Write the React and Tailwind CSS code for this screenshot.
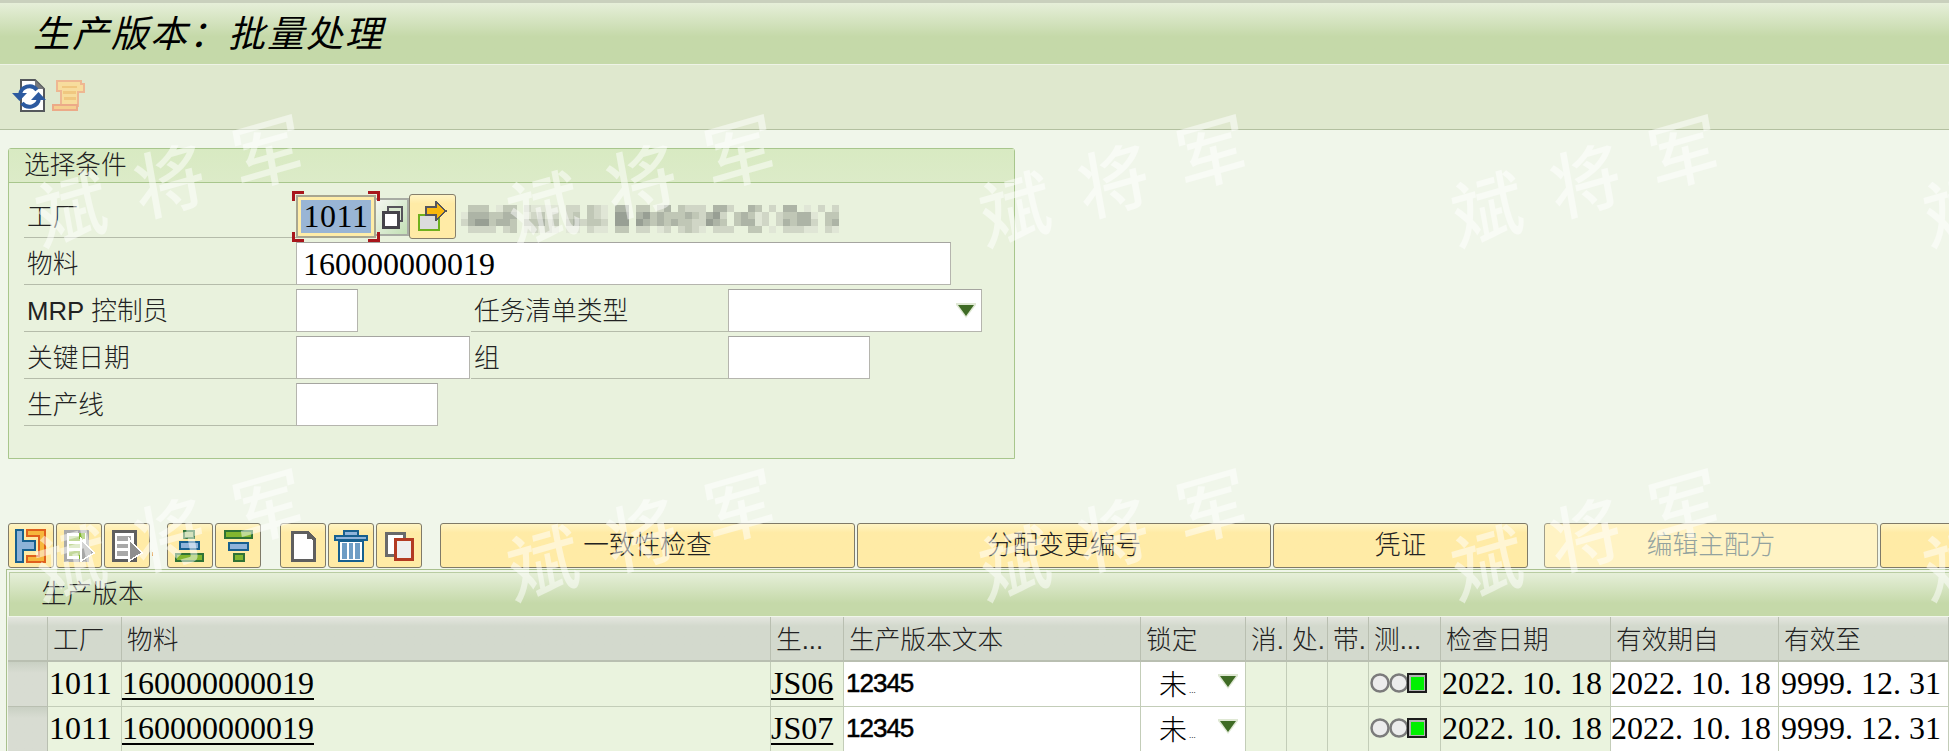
import React from 'react';

// shared column template for the production version table
const tableCols = 'grid grid-cols-[40px_74px_649px_73px_297px_105px_41px_41px_41px_72px_170px_168px_1fr]';
const serif = "font-['Liberation_Serif','Noto_Sans_CJK_SC',serif]";

const mosaicRows = [
  '.333.133.21111.22.321.44.33.24.3222.442..43.2.44.1.2.2.',
  '14443344.12312.23.321.55.4534333432452.34312.233441.33.',
  '24553443.33423.342332.55.5434343322543.34412.243442.34.',
  '.2222.23.12121.11.211.33.22.12.2321.222..33.1.22211.21.',
];
const mosaicColors = { 1: '#e0e6d6', 2: '#d0d6c6', 3: '#c0c7b6', 4: '#adb4a6', 5: '#989f94' };

function Mosaic() {
  return (
    <svg width="385" height="28" viewBox="0 0 385 28" shapeRendering="crispEdges" className="ml-[5px] mt-[14px] shrink-0">
      {mosaicRows.map((row, y) =>
        row.split('').map((c, x) =>
          c === '.' ? null : <rect key={`${x}-${y}`} x={x * 7} y={y * 7} width="7" height="7" fill={mosaicColors[c]} />
        )
      )}
    </svg>
  );
}

function RefreshIcon() {
  return (
    <svg width="34" height="34" viewBox="0 0 34 34">
      <path d="M9 1h14l9 9v22H9z" fill="#fff" stroke="#55585c" strokeWidth="2" />
      <path d="M23 1v9h9z" fill="#77797c" />
      <path d="M8 16A9.5 9.5 0 0 1 25 11" fill="none" stroke="#2c5aa0" strokeWidth="4" />
      <path d="M0 14h15l-7.5 8z" fill="#2c5aa0" />
      <path d="M27 19A9.5 9.5 0 0 1 10 24" fill="none" stroke="#2c5aa0" strokeWidth="4" />
      <path d="M19 21h15l-7.5-8z" fill="#2c5aa0" />
    </svg>
  );
}

function ScrollIcon() {
  return (
    <svg width="34" height="34" viewBox="0 0 34 34" shapeRendering="crispEdges">
      <path d="M5 2h24v3h3v8h-6v14h-1v3H3v-4h6V12H5z" fill="#f7dd9d" stroke="#eeb792" strokeWidth="2" />
      <path d="M10 7h15v2H10zM11 12h13v3H11zM12 18h12v3H12z" fill="#f0c880" />
      <path d="M1 26h24v5H1z" fill="#f5cf8f" stroke="#ecaa88" strokeWidth="2" />
    </svg>
  );
}

function CopyIcon() {
  return (
    <svg width="22" height="24" viewBox="0 0 22 24" shapeRendering="crispEdges">
      <path d="M7 2h14v14H7z" fill="#d8e8cf" stroke="#55535a" strokeWidth="2" />
      <path d="M2 7h15v15H2z" fill="#fff" stroke="#45434a" strokeWidth="3" />
    </svg>
  );
}

function OpenIcon() {
  return (
    <svg width="32" height="32" viewBox="0 0 32 32" shapeRendering="crispEdges">
      <path d="M2 14h20v15H2z" fill="#dcdcdc" stroke="#6fb01d" strokeWidth="2.5" />
      <path d="M9 6h10V1l10 9-10 9v-5H9z" fill="#f9b80f" stroke="#55555c" strokeWidth="1.5" />
    </svg>
  );
}

function IconHistory() {
  return (
    <svg width="32" height="34" viewBox="0 0 32 34" shapeRendering="crispEdges">
      <path d="M12 1h18v32H12v-6h12V7H12z" fill="#f6b73c" stroke="#e0601c" strokeWidth="2" />
      <path d="M1 1h7v11h12v9H8v12H1z" fill="#8eb3d8" stroke="#17608f" strokeWidth="2" />
    </svg>
  );
}

function IconSelect({ dark }) {
  const stroke = dark ? '#5f5f5f' : '#a9a9a9';
  const line = dark ? '#a8a8a8' : '#c3d89a';
  return (
    <svg width="32" height="34" viewBox="0 0 32 34" shapeRendering="crispEdges">
      <path d="M2 2h22v29H2z" fill="#fff" stroke={stroke} strokeWidth="3" />
      <path d="M6 7h14v5H6zM6 15h14v4H6zM6 22h14v5H6z" fill={line} />
      {!dark && <path d="M16 4h6v6h-6zM16 26h6v4h-6z" fill="#7fb52d" />}
      <path d="M18 10l13 14-13 8z" fill={dark ? '#8e8e8e' : '#a7a7a7'} stroke="#fff" strokeWidth="1.5" />
    </svg>
  );
}

function IconPyramid({ flip }) {
  return (
    <svg width="30" height="32" viewBox="0 0 30 32" shapeRendering="crispEdges" className={flip ? 'rotate-180' : ''}>
      <path d="M9 1h10v7H9z" fill={flip ? '#82b62f' : '#aac67c'} stroke="#2f7235" strokeWidth="2" />
      <path d="M5 12h19v7H5z" fill="#8fb4da" stroke="#17608f" strokeWidth="2" />
      <path d="M1 24h27v7H1z" fill="#82b62f" stroke="#2f7235" strokeWidth="2" />
    </svg>
  );
}

function IconDoc() {
  return (
    <svg width="26" height="32" viewBox="0 0 26 32" shapeRendering="crispEdges">
      <path d="M2 2h15l7 7v21H2z" fill="#fff" stroke="#5f5f5f" strokeWidth="3" />
      <path d="M17 1v8h8z" fill="#5f5f5f" />
    </svg>
  );
}

function IconTrash() {
  return (
    <svg width="34" height="34" viewBox="0 0 34 34" shapeRendering="crispEdges">
      <path d="M1 7h32v4H1zM10 2h14v5H10z" fill="#8fb4da" stroke="#17608f" strokeWidth="2" />
      <path d="M5 12h24v20H5z" fill="#fff" stroke="#17608f" strokeWidth="2.5" />
      <path d="M8 14h5v16H8zM15 14h4v16h-4zM21 14h5v16h-5z" fill="#6e9dc5" />
    </svg>
  );
}

function IconCopyDoc() {
  return (
    <svg width="30" height="30" viewBox="0 0 30 30" shapeRendering="crispEdges">
      <path d="M2 2h18v22H2z" fill="#fff" stroke="#6a6a6a" strokeWidth="3" />
      <path d="M11 8h17v20H11z" fill="#eeeeee" stroke="#b33a22" strokeWidth="3" />
    </svg>
  );
}

function Triangle() {
  return (
    <svg width="20" height="15" viewBox="0 0 20 15">
      <path d="M0 0h20v2l-10 13L0 2z" fill="#dfe8d4" />
      <path d="M2 2h16l-8 11z" fill="#3f6b25" />
    </svg>
  );
}

function Lights() {
  return (
    <svg width="57" height="22" viewBox="0 0 57 22" className="shrink-0">
      <circle cx="10" cy="11" r="8.5" fill="#ececec" stroke="#7b7b7b" strokeWidth="2.5" />
      <circle cx="29" cy="11" r="8.5" fill="#ececec" stroke="#7b7b7b" strokeWidth="2.5" />
      <rect x="38" y="2" width="18" height="18" fill="#b4b4b4" stroke="#1c1c1c" strokeWidth="2" />
      <rect x="41" y="5" width="13" height="13" fill="#00f000" />
    </svg>
  );
}

function ToolBtn({ children, className = '' }) {
  return (
    <button className={`w-[46px] h-[45px] flex items-center justify-center rounded-[3px] border border-[#7f7a68] bg-gradient-to-b from-[#fff4c4] to-[#ffeba6] to-[20%] shrink-0 ${className}`}>
      {children}
    </button>
  );
}

function TextBtn({ label, width, disabled }) {
  return (
    <button
      className={`${width} h-[45px] shrink-0 rounded-[3px] border text-[25.7px] font-light flex items-center justify-center ${
        disabled
          ? 'border-[#a09d8a] bg-[#fff3c4] text-[#93a29e]'
          : 'border-[#7f7a68] bg-gradient-to-b from-[#fff4c4] to-[#ffeba6] to-[20%] text-[#222]'
      }`}
    >
      {label}
    </button>
  );
}

function Label({ children, width = 'w-[272px]' }) {
  return (
    <div className={`${width} h-full border-b border-[#b5bcaa] flex items-center pl-[3px] pt-[6px] text-[25.7px] font-light text-[#222] shrink-0`}>
      {children}
    </div>
  );
}

function Field({ width, children }) {
  return (
    <div className={`${width} h-[43px] self-end bg-white border border-[#b5b5ae] border-t-[#a5a5a0] flex items-center shrink-0 ${serif} text-[32px] text-black pl-[6px]`}>
      {children}
    </div>
  );
}

function HeaderCell({ children }) {
  return (
    <div className="h-full border-r border-b-2 border-[#b9bfb1] flex items-center pl-[5px] pt-[3px] text-[25.7px] font-light text-[#222] whitespace-nowrap overflow-hidden">
      {children}
    </div>
  );
}

function Cell({ white, children, className = '' }) {
  return (
    <div className={`h-full border-r border-b border-[#c3cdb8] flex items-center pb-[2px] overflow-hidden whitespace-nowrap ${white ? 'bg-white' : 'bg-[#eaf3de]'} ${className}`}>
      {children}
    </div>
  );
}

function TableRow({ plant, material, version, text, check, from, to }) {
  return (
    <div className={`${tableCols} h-[45px] ${serif} text-[32px] text-black`}>
      <div className="h-full border-r border-b border-[#b9bfb1] bg-gradient-to-b from-[#c9d0c3] to-[#d8dcd2] to-[25%]" />
      <Cell className="pl-[1px]">{plant}</Cell>
      <Cell><span className="underline decoration-2 underline-offset-[4px]">{material}</span></Cell>
      <Cell><span className="underline decoration-2 underline-offset-[4px]">{version}</span></Cell>
      <Cell white className="pl-[2px] font-['Liberation_Sans',sans-serif] text-[26px] tracking-[-1px] [-webkit-text-stroke:0.5px_black]">{text}</Cell>
      <Cell white className="pl-[18px] text-[28px] font-light font-['Noto_Sans_CJK_SC',sans-serif]">
        <span>未</span>
        <span className="text-[9px] mt-[14px] ml-[2px]">...</span>
        <span className="ml-[22px] -mt-[4px]"><Triangle /></span>
      </Cell>
      <Cell />
      <Cell />
      <Cell />
      <Cell className="pl-[1px]"><Lights /></Cell>
      <Cell className="pl-[1px]">{check}</Cell>
      <Cell white>{from}</Cell>
      <Cell white className="pl-[2px]">{to}</Cell>
    </div>
  );
}

const watermarkTiles = [];
[173, 527].forEach((y) => {
  [168, 640, 1112, 1584, 2056].forEach((x) => watermarkTiles.push({ x, y }));
});

function Watermark() {
  return (
    <div className="absolute inset-0 overflow-hidden pointer-events-none">
      {watermarkTiles.map((t) => (
        <span
          key={`${t.x}-${t.y}`}
          className="absolute -translate-x-1/2 -translate-y-1/2 -rotate-[16deg] -skew-x-6 text-[72px] tracking-[30px] font-medium text-white/50 whitespace-nowrap font-['Noto_Sans_CJK_SC',sans-serif]"
          style={{ left: t.x + 15, top: t.y }}
        >
          斌将军
        </span>
      ))}
    </div>
  );
}

export default function App() {
  return (
    <div className="relative w-[1949px] h-[751px] overflow-hidden bg-[#f0f6ea] font-['Liberation_Sans','Noto_Sans_CJK_SC',sans-serif]">
      {/* title */}
      <div className="h-[65px] border-t-[3px] border-[#c9d0bd] border-b border-b-[#eef3e6] bg-gradient-to-b from-[#e6efd9] to-[#c5d9a9] to-[55%] flex items-center pl-[33px] pb-[3px]">
        <h1 className="text-[37px] tracking-[2px] italic font-normal text-black font-['Noto_Sans_CJK_SC',sans-serif]">生产版本：批量处理</h1>
      </div>
      {/* toolbar */}
      <div className="h-[65px] bg-[#dfe8ce] border-b border-[#b3c0a0] flex items-center pl-[12px] gap-[6px] pb-[3px]">
        <RefreshIcon />
        <ScrollIcon />
      </div>

      {/* selection */}
      <div className="ml-[8px] mt-[18px] w-[1007px] h-[311px] border border-[#a8c68c] rounded-t-[3px] bg-[#e9f2dd]">
        <div className="h-[34px] border-b border-[#a8c68c] bg-gradient-to-b from-[#d8eac2] to-[#dcebc8] flex items-center pl-[15px] text-[25.7px] font-light text-[#222]">
          选择条件
        </div>
        <div className="pt-[8px] pl-[15px]">
          <div className="flex h-[47px]">
            <Label>工厂</Label>
            <div className="relative w-[80px] h-[43px] self-start mt-[4px] shrink-0 bg-[#ffeda8] border-2 border-[#a8a690] flex items-center justify-center">
              <span className={`${serif} text-[32px] leading-[33px] bg-[#99b5d5] text-black px-[3px] tracking-[0.5px]`}>1011</span>
              <span className="absolute -left-[6px] -top-[6px] w-[12px] h-[10px] border-l-[3px] border-t-[3px] border-[#a8161c]" />
              <span className="absolute -right-[6px] -top-[6px] w-[12px] h-[10px] border-r-[3px] border-t-[3px] border-[#a8161c]" />
              <span className="absolute -left-[6px] -bottom-[6px] w-[12px] h-[10px] border-l-[3px] border-b-[3px] border-[#a8161c]" />
              <span className="absolute -right-[6px] -bottom-[6px] w-[12px] h-[10px] border-r-[3px] border-b-[3px] border-[#a8161c]" />
            </div>
            <div className="w-[33px] h-[38px] mt-[7px] shrink-0 border-2 border-l-0 border-[#a8aca4] bg-gradient-to-br from-[#f4f7f1] to-[#c3e0b5] flex items-center justify-center">
              <CopyIcon />
            </div>
            <div className="w-[47px] h-[45px] mt-[3px] shrink-0 rounded-[3px] border border-[#857f6c] bg-gradient-to-b from-[#fff4c4] to-[#ffeba6] to-[20%] flex items-center justify-center">
              <OpenIcon />
            </div>
            <Mosaic />
          </div>
          <div className="flex h-[47px]">
            <Label>物料</Label>
            <Field width="w-[655px]">160000000019</Field>
          </div>
          <div className="flex h-[47px]">
            <Label><span className="font-medium">MRP</span>&nbsp;控制员</Label>
            <Field width="w-[62px]" />
            <div className="w-[113px] shrink-0" />
            <Label width="w-[257px]">任务清单类型</Label>
            <Field width="w-[254px]">
              <span className="ml-auto mr-[5px]"><Triangle /></span>
            </Field>
          </div>
          <div className="flex h-[47px]">
            <Label>关键日期</Label>
            <Field width="w-[174px]" />
            <div className="w-px shrink-0" />
            <Label width="w-[257px]">组</Label>
            <Field width="w-[142px]" />
          </div>
          <div className="flex h-[47px]">
            <Label>生产线</Label>
            <Field width="w-[142px]" />
          </div>
        </div>
      </div>

      {/* button bar */}
      <div className="mt-[64px] ml-[8px] flex gap-[2px] h-[45px]">
        <ToolBtn><IconHistory /></ToolBtn>
        <ToolBtn><IconSelect /></ToolBtn>
        <ToolBtn><IconSelect dark /></ToolBtn>
        <span className="w-px h-[4px] mt-[29px] bg-[#d9892b] shrink-0" />
        <ToolBtn className="ml-[12px]"><IconPyramid /></ToolBtn>
        <ToolBtn><IconPyramid flip /></ToolBtn>
        <ToolBtn className="ml-[17px]"><IconDoc /></ToolBtn>
        <ToolBtn><IconTrash /></ToolBtn>
        <ToolBtn><IconCopyDoc /></ToolBtn>
        <div className="w-[14px] shrink-0" />
        <TextBtn label="一致性检查" width="w-[415px]" />
        <TextBtn label="分配变更编号" width="w-[414px]" />
        <TextBtn label="凭证" width="w-[255px]" />
        <div className="w-[12px] shrink-0" />
        <TextBtn label="编辑主配方" width="w-[334px]" disabled />
        <TextBtn label="" width="w-[100px]" />
      </div>

      {/* production versions */}
      <div className="mt-[1px] ml-[6px] border-t border-l border-[#a9c08e] pt-[2px] pl-[1px]">
        <div className="h-[44px] ml-[1px] border-t border-l border-[#b9cca2] bg-gradient-to-b from-[#e6efd9] to-[#c5d9a9] to-[70%] flex items-center pl-[31px] text-[25.7px] font-light text-[#222]">
          生产版本
        </div>
        <div className="mt-[1px]">
          <div className={`${tableCols} h-[45px] bg-gradient-to-b from-[#e4e6df] to-[#d3d9cd] to-[20%]`}>
            <HeaderCell />
            <HeaderCell>工厂</HeaderCell>
            <HeaderCell>物料</HeaderCell>
            <HeaderCell>生...</HeaderCell>
            <HeaderCell>生产版本文本</HeaderCell>
            <HeaderCell>锁定</HeaderCell>
            <HeaderCell>消.</HeaderCell>
            <HeaderCell>处.</HeaderCell>
            <HeaderCell>带.</HeaderCell>
            <HeaderCell>测...</HeaderCell>
            <HeaderCell>检查日期</HeaderCell>
            <HeaderCell>有效期自</HeaderCell>
            <HeaderCell>有效至</HeaderCell>
          </div>
          <TableRow plant="1011" material="160000000019" version="JS06" text="12345" check="2022. 10. 18" from="2022. 10. 18" to="9999. 12. 31" />
          <TableRow plant="1011" material="160000000019" version="JS07" text="12345" check="2022. 10. 18" from="2022. 10. 18" to="9999. 12. 31" />
        </div>
      </div>

      <Watermark />
    </div>
  );
}
